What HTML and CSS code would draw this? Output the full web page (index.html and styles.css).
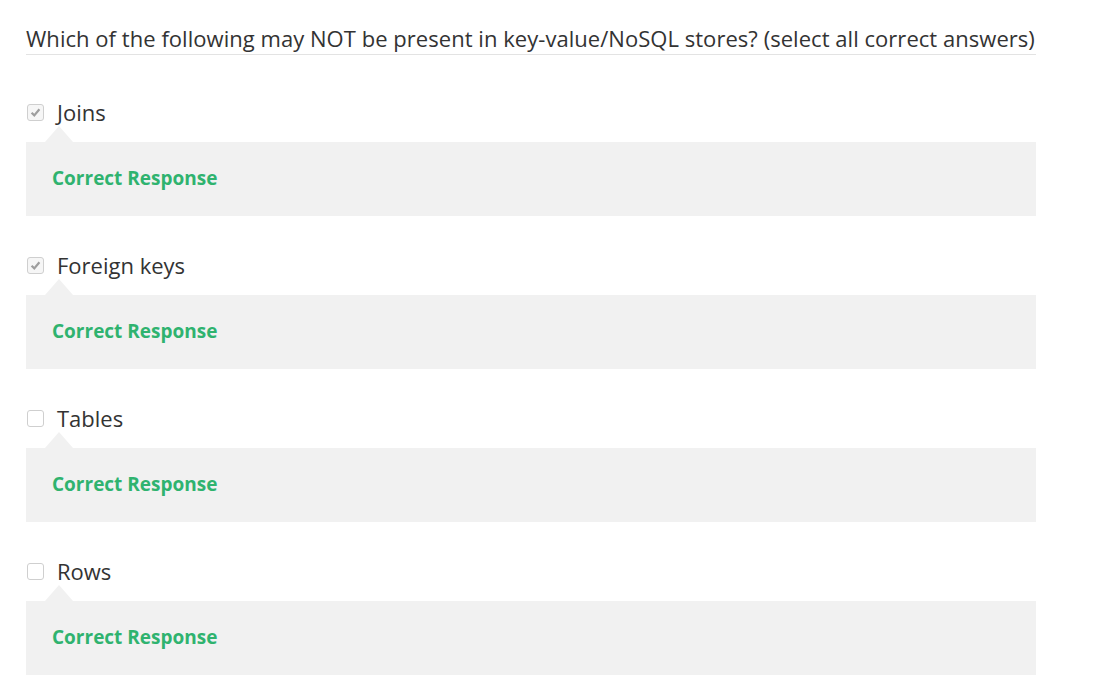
FILE: index.html
```html
<!DOCTYPE html>
<html>
<head>
<meta charset="utf-8">
<link rel="stylesheet" href="styles.css">
</head>
<body>
<div class="quiz">
  <div class="question">Which of the following may NOT be present in key-value/NoSQL stores? (select all correct answers)</div>
  <div class="option">
    <label class="label"><span class="box checked"><svg viewBox="0 0 17 17" width="17" height="17"><path d="M4.6 8.7 L7.3 11.4 L12.4 5.2" fill="none" stroke="#9e9e9e" stroke-width="2.2"/></svg></span><span class="text">Joins</span></label>
    <div class="arrow"></div>
    <div class="panel"><span class="resp">Correct Response</span></div>
  </div>
  <div class="option">
    <label class="label"><span class="box checked"><svg viewBox="0 0 17 17" width="17" height="17"><path d="M4.6 8.7 L7.3 11.4 L12.4 5.2" fill="none" stroke="#9e9e9e" stroke-width="2.2"/></svg></span><span class="text">Foreign keys</span></label>
    <div class="arrow"></div>
    <div class="panel"><span class="resp">Correct Response</span></div>
  </div>
  <div class="option">
    <label class="label"><span class="box"></span><span class="text">Tables</span></label>
    <div class="arrow"></div>
    <div class="panel"><span class="resp">Correct Response</span></div>
  </div>
  <div class="option">
    <label class="label"><span class="box"></span><span class="text">Rows</span></label>
    <div class="arrow"></div>
    <div class="panel"><span class="resp">Correct Response</span></div>
  </div>
</div>
</body>
</html>
```

FILE: styles.css
```css
html, body {
  margin: 0;
  padding: 0;
  background: #fff;
}
body {
  font-family: "Open Sans", "Liberation Sans", sans-serif;
  color: #333;
}
.quiz {
  width: 1010px;
  padding: 24px 0 0 26px;
}
.question {
  font-size: 22px;
  letter-spacing: 0.04px;
  line-height: 28px;
  padding-bottom: 2px;
  border-bottom: 1px solid #e3e3e3;
  color: #333;
  white-space: nowrap;
}
.option {
  margin-top: 45px;
}
.option + .option {
  margin-top: 37px;
}
.label {
  display: flex;
  align-items: center;
  height: 26px;
}
.box {
  width: 17px;
  height: 17px;
  box-sizing: border-box;
  border: 1px solid #cfcfcf;
  border-radius: 3px;
  margin-left: 1px;
  margin-right: 13px;
  margin-top: -2px;
  display: flex;
  background: #fff;
}
.box.checked {
  background: #f6f6f6;
}
.box svg {
  margin: -1px;
}
.text {
  font-size: 22px;
  line-height: 26px;
  margin-top: -2px;
  color: #333;
}
.arrow {
  width: 0;
  height: 0;
  margin-left: 19px;
  border-left: 14px solid transparent;
  border-right: 14px solid transparent;
  border-bottom: 16px solid #f1f1f1;
}
.panel {
  background: #f1f1f1;
  height: 74px;
  box-sizing: border-box;
  padding-bottom: 2px;
  display: flex;
  align-items: center;
  padding-left: 26px;
}
.resp {
  font-weight: 700;
  font-size: 19px;
  color: #2fb36f;
}
```
